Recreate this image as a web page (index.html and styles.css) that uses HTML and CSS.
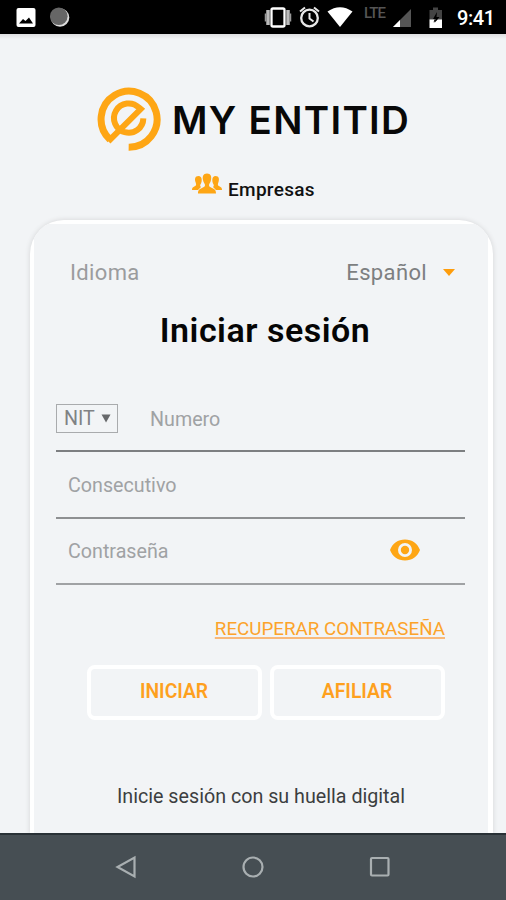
FILE: index.html
```
<!DOCTYPE html>
<html lang="es">
<head>
  <meta charset="UTF-8">
  <meta name="viewport" content="width=device-width, initial-scale=1.0">
  <title>My Entitid</title>
  <link rel="stylesheet" href="styles.css">
</head>
<body>
  <div class="status-bar">
    <svg width="506" height="34" viewBox="0 0 506 34">
      <!-- image -->
      <rect x="16.5" y="8" width="19" height="19" rx="2" fill="#fff"/>
      <path d="M19 23.500l4-4.500 2.500 2 3.500-3.500 4 6z" fill="#000"/>
      <!-- sync -->
      <circle cx="60" cy="17.500" r="9.300" fill="#ddd"/>
      <circle cx="58.800" cy="16.300" r="8.800" fill="#666"/>
      <!-- vibrate -->
      <rect x="271.500" y="8.500" width="13" height="18" rx="1.500" fill="none" stroke="#fff" stroke-width="2.300"/>
      <path d="M268 10v15M288 10v15" stroke="#bbb" stroke-width="3.500"/>
      <path d="M265.500 13.500v8M290.500 13.500v8" stroke="#999" stroke-width="1.500"/>
      <!-- alarm -->
      <circle cx="309.500" cy="18" r="8.300" fill="none" stroke="#e8e8e8" stroke-width="2.300"/>
      <path d="M309.500 13v5.500l4 3M300 11.500l5-4M319 11.500l-5-4" fill="none" stroke="#e8e8e8" stroke-width="2"/>
      <!-- wifi -->
      <path d="M327.500 11.500Q340 3 352.500 11.500L340 27z" fill="#fff"/>
      <!-- signal -->
      <path d="M393 27L411 9v18z" fill="#555"/>
      <path d="M393 27l7-7v7z" fill="#fff"/>
      <!-- battery -->
      <path d="M429.500 10h3.500V7.500h5V10h4v10h-12.500z" fill="#444"/>
      <path d="M429.500 19.500h5l-1 3 4-3h4.500V28h-12.500z" fill="#fff"/>
      <path d="M437 12l-4 7h3l-1.500 4 5-6h-3z" fill="#000"/>
      <text class="lte" x="364" y="18" textLength="22">LTE</text>
      <text class="time" x="457" y="25" textLength="38">9:41</text>
    </svg>
  </div>

  <main>
    <header class="brand">
      <svg class="logo" width="64" height="64" viewBox="0 0 192 192">
        <path class="ring" d="M95 180.500A84 84 0 1 0 39 158"/>
        <path d="M34 163L131 66L126 62A44 44 0 1 0 139 94"/>
      </svg>
      <span class="brand-name">MY ENTITID</span>
    </header>

    <div class="companies">
      <svg width="30" height="22" viewBox="0 0 30 22">
        <path d="M6.500 3C3 3 2.500 6 3.500 9c.6 2 1 3.200 0 3.700L1.500 14C.3 14.600 0 15.500 0 17h6l3-3c-1.200-.8-1-2 0-3.500 1-2 1.500-7.500-2.500-7.500zM23.500 3c3.500 0 4 3 3 6-.6 2-1 3.200 0 3.700l2 1.300c1.200.6 1.500 1.500 1.500 3h-6l-3-3c1.200-.8 1-2 0-3.500-1-2-1.500-7.500 2.500-7.500z"/>
        <path d="M15 .5c-4 0-4.700 3-4 6.500.4 2.500 2 3.500 2 5 0 1.700-.8 2-3 3-3 1.300-4 2.200-4 5.500h18c0-3.300-1-4.200-4-5.500-2.200-1-3-1.300-3-3 0-1.500 1.600-2.500 2-5C19.700 3.500 19 .5 15 .5z"/>
      </svg>
      <span>Empresas</span>
    </div>

    <div class="card">
      <form class="card-body">
        <div class="language">
          <span class="language-label">Idioma</span>
          <span class="language-value">Español</span>
          <span class="caret"></span>
        </div>

        <h1>Iniciar sesión</h1>

        <div class="field">
          <span class="doc-type">NIT <svg width="10" height="9" viewBox="0 0 10 9"><path d="M.5.5h9L5 8.500z"/></svg></span>
          <span class="placeholder">Numero</span>
        </div>
        <div class="field field-second">
          <span class="placeholder">Consecutivo</span>
        </div>
        <div class="field field-last">
          <span class="placeholder">Contraseña</span>
          <svg class="eye" width="30" height="22" viewBox="0 0 30 22">
            <path fill-rule="evenodd" d="M15 .5C8 .5 2.500 4.500 0 11c2.500 6.500 8 10.500 15 10.500S27.500 17.500 30 11C27.500 4.500 22 .5 15 .5zM15 4a7 7 0 1 1 0 14 7 7 0 0 1 0-14zm0 2.800a4.200 4.200 0 1 0 0 8.400 4.200 4.200 0 0 0 0-8.400z"/>
          </svg>
        </div>

        <a class="recover">RECUPERAR CONTRASEÑA</a>

        <div class="button-group">
          <button type="button">INICIAR</button>
          <button type="button">AFILIAR</button>
        </div>

        <p class="fingerprint">Inicie sesión con su huella digital</p>
      </form>
    </div>
  </main>

  <nav class="nav-bar">
    <svg width="22" height="24" viewBox="0 0 22 24"><path d="M19.500 2.500v19L2.500 12z"/></svg>
    <svg width="22" height="24" viewBox="0 0 22 24"><circle cx="11" cy="12" r="9.500"/></svg>
    <svg width="22" height="24" viewBox="0 0 22 24"><rect x="2" y="3" width="17.500" height="17.500" rx="1"/></svg>
  </nav>
</body>
</html>
```
FILE: styles.css
```
* {
  box-sizing: border-box;
}
body {
  margin: 0;
  height: 900px;
  display: flex;
  flex-direction: column;
  overflow: hidden;
  background-color: #f2f4f6;
  font-family: Roboto, "Liberation Sans", sans-serif;
}
svg {
  display: block;
  flex: none;
}
.status-bar {
  flex: none;
  height: 34px;
  background-color: #000;
}
.lte {
  fill: #555;
  font-size: 15px;
  font-weight: 500;
}
.time {
  fill: #fff;
  font-size: 20px;
  font-weight: 500;
}
main {
  flex: 1;
  min-height: 0;
  display: flex;
  flex-direction: column;
  overflow: hidden;
  background: linear-gradient(#dedfe0, #f2f4f6 5px);
}
.brand {
  display: flex;
  align-items: center;
  height: 64px;
  margin: 54px 0 0 97px;
}
.logo {
  margin-top: -2px;
}
.logo path {
  fill: none;
  stroke: #fea615;
  stroke-width: 18;
}
.logo .ring {
  stroke-width: 21;
}
.brand-name {
  margin-left: 11px;
  font-family: Inter, "Liberation Sans", sans-serif;
  font-size: 38.5px;
  font-weight: 600;
  letter-spacing: 1.3px;
  white-space: nowrap;
  color: #080808;
}
.companies {
  display: flex;
  align-items: center;
  height: 28px;
  margin: 21px 0 0 192px;
  gap: 6px;
  font-size: 19px;
  font-weight: 500;
  letter-spacing: 0.3px;
  color: #111;
}
.companies svg {
  margin-top: -7px;
  fill: #fea615;
}
.companies span {
  margin-top: 5px;
}
.card {
  flex: 1;
  min-height: 0;
  margin: 19px 13px 0 30px;
  padding: 4px 5px 0 4px;
  border-radius: 34px 34px 0 0;
  overflow: hidden;
  background-color: #fff;
  box-shadow: 0 0 4px 1px #dcdddf;
}
.card-body {
  height: 100%;
  padding: 32px 23px 0 22px;
  border-radius: 5px 5px 0 0;
  background-color: #f2f4f6;
}
.language {
  display: flex;
  align-items: center;
  height: 32px;
  padding: 0 10px 0 14px;
  font-size: 22px;
  letter-spacing: 0.35px;
}
.language-label {
  flex: 1;
  color: #9b9c9e;
}
.language-value {
  color: #7d7f81;
}
.caret {
  margin-left: 16px;
  border: 6.5px solid transparent;
  border-top: 7px solid #fe9d0c;
  border-bottom: none;
}
h1 {
  margin: 21px 0 0 9px;
  font-size: 34px;
  line-height: 42px;
  font-weight: 600;
  letter-spacing: 0.5px;
  text-align: center;
  white-space: nowrap;
  color: #050505;
}
.field {
  display: flex;
  align-items: center;
  height: 67px;
  border-bottom: 2px solid #7d7f81;
  font-size: 19.7px;
}
h1 + .field {
  margin-top: 34px;
}
.field-second {
  padding-top: 2px;
  border-color: #8e9092;
}
.field-last {
  height: 66px;
  border-color: #a0a2a4;
}
.placeholder {
  flex: 1;
  margin-left: 12px;
  color: #a0a2a4;
}
.doc-type {
  display: flex;
  align-items: center;
  gap: 6px;
  width: 62px;
  height: 29px;
  margin-top: 1px;
  padding-left: 7px;
  border: 1.5px solid #a9abad;
  color: #808284;
}
.doc-type svg {
  fill: #67696b;
}
.doc-type + .placeholder {
  margin-left: 32px;
  padding-top: 3px;
}
.eye {
  margin-right: 45px;
  margin-top: -2px;
  fill: #fea615;
}
.recover {
  display: block;
  margin: 32px 20px 0 0;
  font-size: 18.8px;
  line-height: 24px;
  text-align: right;
  text-decoration: underline;
  text-decoration-thickness: 2px;
  text-underline-offset: 2px;
  text-decoration-color: #f9b878;
  white-space: nowrap;
  color: #fca32a;
}
.button-group {
  display: flex;
  gap: 8px;
  margin: 24px 20px 0 31px;
}
button {
  flex: 1;
  height: 55px;
  padding: 0 1px 3px 0;
  border: 4px solid #fff;
  border-radius: 8px;
  background-color: #f2f4f6;
  font-family: inherit;
  font-size: 19.3px;
  font-weight: 600;
  color: #fea01e;
}
.fingerprint {
  margin: 64px 0 0 1px;
  font-size: 19.7px;
  line-height: 25px;
  text-align: center;
  white-space: nowrap;
  color: #3c3e40;
}
.nav-bar {
  flex: none;
  display: flex;
  justify-content: center;
  align-items: center;
  gap: 105px;
  height: 67px;
  padding: 0 0 2px;
  border-top: 2px solid #293136;
  background-color: #464e53;
}
.nav-bar svg {
  fill: none;
  stroke: #a9afb1;
  stroke-width: 2.2;
}
```
